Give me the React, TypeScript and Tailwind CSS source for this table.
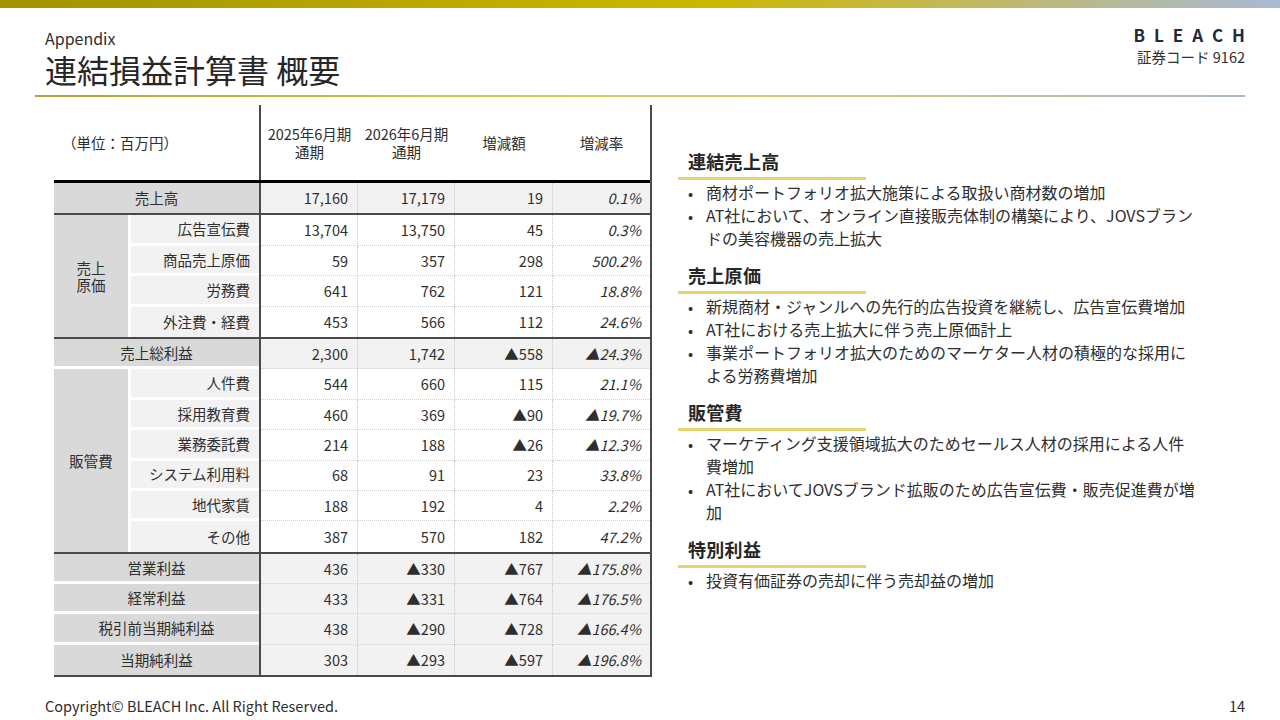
import React from 'react';

type Vals = [string, string, string, string];

const darkLine = 'border-[#4a4a4a]';

const notes: { title: string; items: string[][] }[] = [
  {
    title: '連結売上高',
    items: [
      ['商材ポートフォリオ拡大施策による取扱い商材数の増加'],
      ['AT社において、オンライン直接販売体制の構築により、JOVSブラン', 'ドの美容機器の売上拡大'],
    ],
  },
  {
    title: '売上原価',
    items: [
      ['新規商材・ジャンルへの先行的広告投資を継続し、広告宣伝費増加'],
      ['AT社における売上拡大に伴う売上原価計上'],
      ['事業ポートフォリオ拡大のためのマーケター人材の積極的な採用に', 'よる労務費増加'],
    ],
  },
  {
    title: '販管費',
    items: [
      ['マーケティング支援領域拡大のためセールス人材の採用による人件', '費増加'],
      ['AT社においてJOVSブランド拡販のため広告宣伝費・販売促進費が増', '加'],
    ],
  },
  {
    title: '特別利益',
    items: [['投資有価証券の売却に伴う売却益の増加']],
  },
];

const costOfSales: { label: string; v: Vals }[] = [
  { label: '広告宣伝費', v: ['13,704', '13,750', '45', '0.3%'] },
  { label: '商品売上原価', v: ['59', '357', '298', '500.2%'] },
  { label: '労務費', v: ['641', '762', '121', '18.8%'] },
  { label: '外注費・経費', v: ['453', '566', '112', '24.6%'] },
];

const sga: { label: string; v: Vals }[] = [
  { label: '人件費', v: ['544', '660', '115', '21.1%'] },
  { label: '採用教育費', v: ['460', '369', '▲90', '▲19.7%'] },
  { label: '業務委託費', v: ['214', '188', '▲26', '▲12.3%'] },
  { label: 'システム利用料', v: ['68', '91', '23', '33.8%'] },
  { label: '地代家賃', v: ['188', '192', '4', '2.2%'] },
  { label: 'その他', v: ['387', '570', '182', '47.2%'] },
];

const profits: { label: string; v: Vals }[] = [
  { label: '営業利益', v: ['436', '▲330', '▲767', '▲175.8%'] },
  { label: '経常利益', v: ['433', '▲331', '▲764', '▲176.5%'] },
  { label: '税引前当期純利益', v: ['438', '▲290', '▲728', '▲166.4%'] },
  { label: '当期純利益', v: ['303', '▲293', '▲597', '▲196.8%'] },
];

function Cells({ v, shaded, dotted }: { v: Vals; shaded?: boolean; dotted?: boolean }) {
  return (
    <>
      {v.map((x, i) => (
        <div
          key={i}
          className={`h-full flex items-center justify-end pr-[9px] border-dotted ${i === 2 ? 'w-[98px]' : 'w-[97px]'} ${
            shaded ? 'bg-[#f2f2f2]' : 'bg-white'
          } ${i < 3 ? 'border-r border-r-[#c8c8c8]' : ''} ${dotted ? 'border-b border-b-[#cfcfcf]' : ''} ${
            i === 3 ? 'italic' : ''
          }`}
        >
          {x}
        </div>
      ))}
    </>
  );
}

function MainRow({ label, v, gap, dotted }: { label: string; v: Vals; gap?: boolean; dotted?: boolean }) {
  return (
    <div className="flex h-[30.4px]">
      <div className={`w-[207px] h-full bg-white border-r-2 ${darkLine} ${gap ? 'pb-[3px]' : ''}`}>
        <div className="h-full bg-[#d9d9d9] flex items-center justify-center">{label}</div>
      </div>
      <Cells v={v} shaded dotted={dotted} />
    </div>
  );
}

function SubRow({ label, v, last }: { label: string; v: Vals; last: boolean }) {
  return (
    <div className="flex h-[30.4px]">
      <div className={`w-[133px] h-full bg-white pl-[3px] border-r-2 ${darkLine} ${last ? '' : 'pb-[3px]'}`}>
        <div className="h-full bg-[#f2f2f2] flex items-center justify-end pr-[9px]">{label}</div>
      </div>
      <Cells v={v} dotted={!last} />
    </div>
  );
}

function Group({ label, rows }: { label: React.ReactNode; rows: { label: string; v: Vals }[] }) {
  return (
    <div className={`flex border-b-2 ${darkLine}`}>
      <div className="w-[74px] bg-[#d9d9d9] flex items-center justify-center leading-[17px] text-center">{label}</div>
      <div className="flex flex-col">
        {rows.map((r, i) => (
          <SubRow key={r.label} label={r.label} v={r.v} last={i === rows.length - 1} />
        ))}
      </div>
    </div>
  );
}

function PlTable() {
  return (
    <div className={`w-[598px] border-r-2 ${darkLine} text-[14.5px] text-[#2e2e2e]`}>
      {/* header */}
      <div className="flex h-[78px] border-b-[3px] border-black">
        <div className={`w-[207px] border-r-2 ${darkLine} flex items-center pl-[8px]`}>（単位：百万円）</div>
        <div className="w-[97px] flex flex-col items-center justify-center leading-[18px]">
          <span>2025年6月期</span>
          <span>通期</span>
        </div>
        <div className="w-[97px] flex flex-col items-center justify-center leading-[18px]">
          <span>2026年6月期</span>
          <span>通期</span>
        </div>
        <div className="w-[98px] flex items-center justify-center">増減額</div>
        <div className="w-[97px] flex items-center justify-center">増減率</div>
      </div>

      <div className={`border-b-2 ${darkLine}`}>
        <MainRow label="売上高" v={['17,160', '17,179', '19', '0.1%']} />
      </div>

      <Group
        label={
          <span>
            売上
            <br />
            原価
          </span>
        }
        rows={costOfSales}
      />

      <MainRow label="売上総利益" v={['2,300', '1,742', '▲558', '▲24.3%']} gap dotted />

      <Group label="販管費" rows={sga} />

      <div className={`border-b-2 ${darkLine}`}>
        {profits.map((r, i) => (
          <MainRow key={r.label} label={r.label} v={r.v} gap={i < profits.length - 1} dotted={i < profits.length - 1} />
        ))}
      </div>
    </div>
  );
}

function Notes() {
  return (
    <div className="ml-[26px] pt-[44px] flex flex-col gap-[13px] text-[#2e2e2e]">
      {notes.map((n) => (
        <div key={n.title}>
          <div className="pl-[10px] text-[18px] leading-[24px] font-bold tracking-[0.3px] text-[#262626]">{n.title}</div>
          <div className="mt-[4px] h-[3px] w-[188px] bg-[#e5d36b]" />
          <ul className="mt-[1px] text-[16px] leading-[23px]">
            {n.items.map((lines, i) => (
              <li key={i} className="flex">
                <span className="w-[28px] pl-[10px] text-[15px]">•</span>
                <span className="whitespace-nowrap">
                  {lines.map((l, j) => (
                    <React.Fragment key={j}>
                      {j > 0 && <br />}
                      {l}
                    </React.Fragment>
                  ))}
                </span>
              </li>
            ))}
          </ul>
        </div>
      ))}
    </div>
  );
}

export default function App() {
  return (
    <div className="w-[1280px] h-[720px] bg-white flex flex-col overflow-hidden font-['Noto_Sans_CJK_JP','Noto_Sans',sans-serif] text-[#2e2e2e]">
      <div className="h-2 bg-[linear-gradient(90deg,#a29300_0%,#cbb800_55%,#c6b842_70%,#a8bad8_100%)]" />

      <div className="flex justify-between pl-[45px] pr-[35px] pt-[20px]">
        <div>
          <div className="text-[16px] leading-[20px]">Appendix</div>
          <div className="text-[32px] leading-[42px] text-[#262626]">連結損益計算書 概要</div>
        </div>
        <div className="flex flex-col items-end mt-[-4px]">
          <div className="text-[17px] leading-[22px] font-bold tracking-[9px] mr-[-9px] text-[#222a3a]">BLEACH</div>
          <div className="mt-[1px] text-[14.5px] leading-[20px]">証券コード 9162</div>
        </div>
      </div>

      <div className="mx-[35px] mt-[5px] h-[2px] bg-[linear-gradient(90deg,#b0a43a_0%,#d9cc5c_45%,#cfc985_70%,#a9b6c9_100%)]" />

      <div className="flex pl-[54px] mt-[8px]">
        <PlTable />
        <Notes />
      </div>

      <div className="mt-auto flex justify-between pl-[45px] pr-[35px] pb-[4px] text-[14.5px] leading-[20px]">
        <span>Copyright© BLEACH Inc. All Right Reserved.</span>
        <span>14</span>
      </div>
    </div>
  );
}
